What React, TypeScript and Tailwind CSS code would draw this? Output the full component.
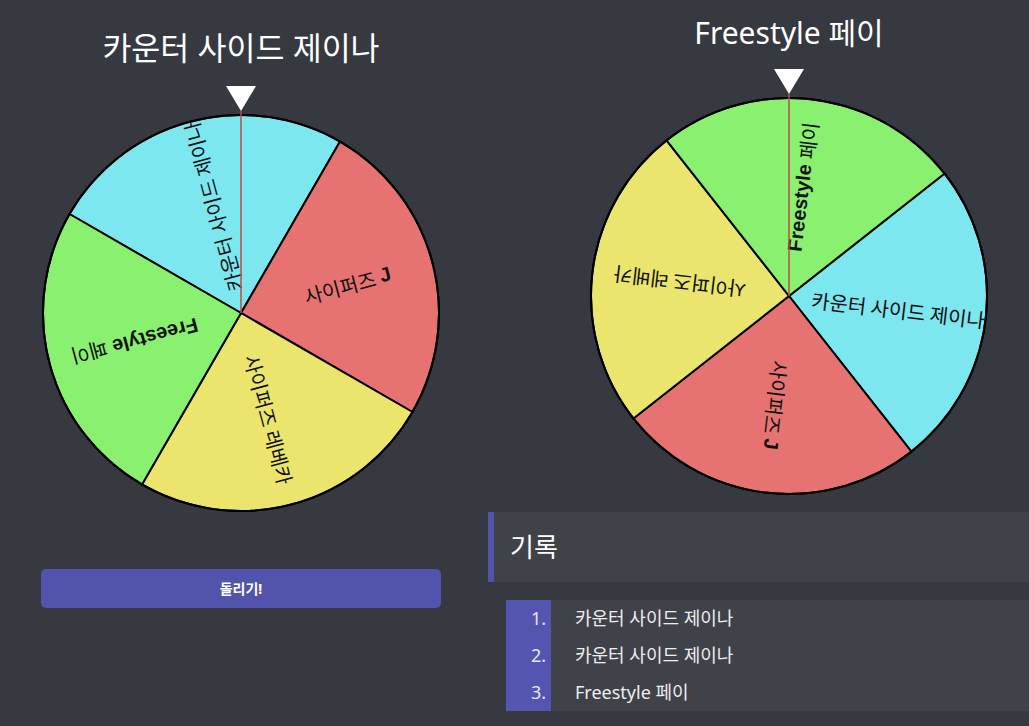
import React from "react";

type Slice = { label: string; color: string };

const slices: Slice[] = [
  { label: "카운터 사이드 제이나", color: "#7de7f0" },
  { label: "사이퍼즈 J", color: "#e77272" },
  { label: "사이퍼즈 레베카", color: "#ebe56e" },
  { label: "Freestyle 페이", color: "#89f16f" },
];

const history = ["카운터 사이드 제이나", "카운터 사이드 제이나", "Freestyle 페이"];

const CX = 200;
const CY = 230;
const R = 198;

function pt(a: number, r: number) {
  const rad = (a * Math.PI) / 180;
  return [CX + r * Math.sin(rad), CY - r * Math.cos(rad)];
}

// split a label into latin (bold) and hangul (regular) runs
function runs(label: string) {
  const out: { t: string; latin: boolean }[] = [];
  for (const ch of label) {
    const latin = /[A-Za-z0-9]/.test(ch) || (ch === " " && out.length > 0 && out[out.length - 1].latin);
    const last = out[out.length - 1];
    if (last && last.latin === latin) last.t += ch;
    else out.push({ t: ch, latin });
  }
  return out;
}

function Wheel({ start }: { start: number }) {
  return (
    <svg width="400" height="430" viewBox="0 0 400 430" className="block">
      {slices.map((s, i) => {
        const a1 = start + i * 90;
        const a2 = a1 + 90;
        const [x1, y1] = pt(a1, R);
        const [x2, y2] = pt(a2, R);
        return (
          <path
            key={s.label}
            d={`M${CX} ${CY} L${x1} ${y1} A${R} ${R} 0 0 1 ${x2} ${y2} Z`}
            fill={s.color}
            stroke="#000"
            strokeWidth="2"
            strokeLinejoin="round"
          />
        );
      })}
      <circle cx={CX} cy={CY} r={R} fill="none" stroke="#000" strokeWidth="2" />
      {slices.map((s, i) => {
        const mid = start + i * 90 + 45;
        return (
          <text
            key={s.label}
            transform={`translate(${CX} ${CY}) rotate(${mid - 90}) translate(110 0)`}
            textAnchor="middle"
            dominantBaseline="central"
            fontSize="20"
            fill="#111"
          >
            {runs(s.label).map((r, k) =>
              r.latin ? (
                <tspan key={k} fontFamily="'Liberation Sans', Arial, sans-serif" fontWeight="700">
                  {r.t}
                </tspan>
              ) : (
                <tspan key={k} fontFamily="'Noto Sans CJK KR', sans-serif" fontWeight="400">
                  {r.t}
                </tspan>
              )
            )}
          </text>
        );
      })}
      <line x1={CX} y1="28" x2={CX} y2={CY} stroke="#c24a47" strokeWidth="1.5" />
      <polygon points="185,3 215,3 200,28" fill="#fff" />
    </svg>
  );
}

export default function App() {
  return (
    <div
      className="min-h-screen w-full overflow-hidden bg-[#36393f] text-[#dcddde] flex"
      style={{ fontFamily: "'Noto Sans', 'Noto Sans CJK KR', sans-serif" }}
    >
      {/* left: current wheel + spin button */}
      <div className="w-[488px] shrink-0 pl-[41px] pt-[28px]">
        <div className="w-[400px]">
          <h1 className="text-center text-[31.5px] leading-[40px] text-white font-normal">카운터 사이드 제이나</h1>
          <div className="mt-[15px]">
            <Wheel start={300} />
          </div>
          <button className="mt-[56px] w-[400px] h-[39px] rounded-[5px] bg-[#5154aa] text-white text-[14px] font-bold">
            돌리기!
          </button>
        </div>
      </div>

      {/* right: result wheel + history */}
      <div className="flex-1 min-w-0 pt-[13px]">
        <div className="ml-[101px] w-[400px]">
          <h1 className="text-center text-[30px] leading-[40px] text-white font-normal">Freestyle 페이</h1>
          <div className="mt-[13px]">
            <Wheel start={51.8} />
          </div>
        </div>

        <div className="mt-[16px] h-[70px] border-l-[6px] border-[#5154aa] bg-[#3f4249] flex items-center pl-[16px]">
          <h2 className="text-[26px] text-white font-normal">기록</h2>
        </div>

        <ol className="mt-[18px] ml-[18px] bg-[#3f4249]">
          {history.map((h, i) => (
            <li key={i} className="flex h-[37px] items-center">
              <span className="w-[45px] h-full bg-[#5455b0] flex items-center justify-end pr-[5px] text-[18px] text-[#e6e6f0]">
                {i + 1}.
              </span>
              <span className="pl-[24px] text-[18px] text-[#eeeeee]">{h}</span>
            </li>
          ))}
        </ol>
      </div>
    </div>
  );
}
